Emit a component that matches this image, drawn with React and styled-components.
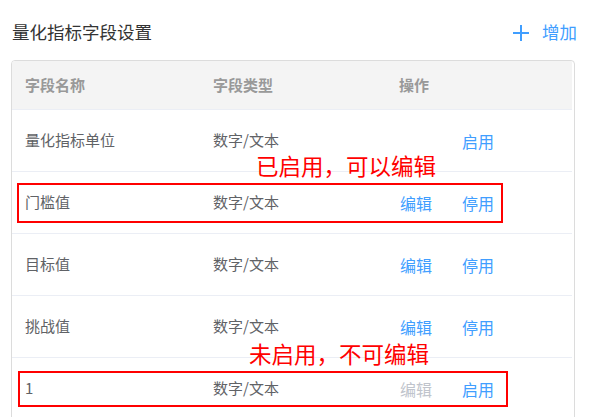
import React from 'react';
import styled, { createGlobalStyle } from 'styled-components';

const GlobalStyle = createGlobalStyle`
  html, body {
    margin: 0;
    padding: 0;
    background: #fff;
    overflow: hidden;
  }
  body {
    font-family: "Noto Sans CJK SC", "Liberation Sans", sans-serif;
  }
`;

const rows = [
  { name: '量化指标单位', type: '数字/文本', enabled: false, hideEdit: true },
  { name: '门槛值', type: '数字/文本', enabled: true },
  { name: '目标值', type: '数字/文本', enabled: true },
  { name: '挑战值', type: '数字/文本', enabled: true },
  { name: '1', type: '数字/文本', enabled: false },
];

function PlusIcon() {
  return (
    <svg width="18" height="18" viewBox="0 0 18 18" fill="none">
      <path d="M9 1v16M1 9h16" stroke="#409eff" strokeWidth="2" />
    </svg>
  );
}

function App() {
  return (
    <>
      <GlobalStyle />
      <Page>
        <Header>
          <Title>量化指标字段设置</Title>
          <AddButton>
            <PlusIcon />
            <span>增加</span>
          </AddButton>
        </Header>
        <Table>
          <HeadRow>
            <HeadCell>字段名称</HeadCell>
            <HeadCell>字段类型</HeadCell>
            <HeadCell>操作</HeadCell>
          </HeadRow>
          {rows.map((row, i) => (
            <Row key={i}>
              <Cell>{row.name}</Cell>
              <Cell>{row.type}</Cell>
              <Actions>
                <Link $hidden={row.hideEdit} $disabled={!row.enabled}>编辑</Link>
                <Link>{row.enabled ? '停用' : '启用'}</Link>
              </Actions>
            </Row>
          ))}
        </Table>

        <Note $top={155} $left={256}>已启用，可以编辑</Note>
        <Frame $top={183} $left={17} $width={486} $height={40} />
        <Note $top={343} $left={249}>未启用，不可编辑</Note>
        <Frame $top={371} $left={18} $width={490} $height={36} />
      </Page>
    </>
  );
}

const Page = styled.div`
  position: relative;
  width: 598px;
  height: 417px;
  box-sizing: border-box;
  padding: 0 23px 0 11px;
`;

const Header = styled.div`
  display: flex;
  align-items: center;
  justify-content: space-between;
  height: 60px;
  padding: 3px 0 0 1px;
  margin-right: -2px;
  box-sizing: border-box;
`;

const Title = styled.div`
  font-size: 17.5px;
  color: #333;
`;

const AddButton = styled.div`
  display: flex;
  align-items: center;
  gap: 12px;
  font-size: 17.5px;
  color: #409eff;
  cursor: pointer;

  svg {
    margin-top: 2px;
  }
`;

const Table = styled.div`
  border: 1px solid #dcdcdc;
  border-radius: 4px;
  overflow: hidden;
  padding-right: 2px;
`;

const grid = `
  display: grid;
  grid-template-columns: 188px 186px 1fr;
  align-items: center;
`;

const HeadRow = styled.div`
  ${grid}
  height: 48px;
  background: #f4f4f4;
  border-bottom: 1px solid #ebeef5;
`;

const HeadCell = styled.div`
  padding-left: 13px;
  font-size: 15px;
  font-weight: bold;
  color: #999;
  margin-top: -2px;
`;

const Row = styled.div`
  ${grid}
  height: 61px;
  border-bottom: 1px solid #ebeef5;
`;

const Cell = styled.div`
  padding-left: 13px;
  font-size: 15px;
  color: #606266;
  margin-top: -2px;
`;

const Actions = styled.div`
  display: flex;
  gap: 30px;
  padding-left: 14px;
  margin-top: 1px;
`;

const Link = styled.span`
  font-size: 16px;
  color: ${(p) => (p.$disabled ? '#c0c4cc' : '#409eff')};
  visibility: ${(p) => (p.$hidden ? 'hidden' : 'visible')};
  cursor: pointer;
`;

const Note = styled.div`
  position: absolute;
  top: ${(p) => p.$top}px;
  left: ${(p) => p.$left}px;
  font-size: 22.5px;
  line-height: 26px;
  color: #ff0000;
  font-family: "Liberation Serif", "Noto Sans CJK SC", serif;
`;

const Frame = styled.div`
  position: absolute;
  top: ${(p) => p.$top}px;
  left: ${(p) => p.$left}px;
  width: ${(p) => p.$width}px;
  height: ${(p) => p.$height}px;
  box-sizing: border-box;
  border: 2px solid #ff0000;
`;

export default App;
